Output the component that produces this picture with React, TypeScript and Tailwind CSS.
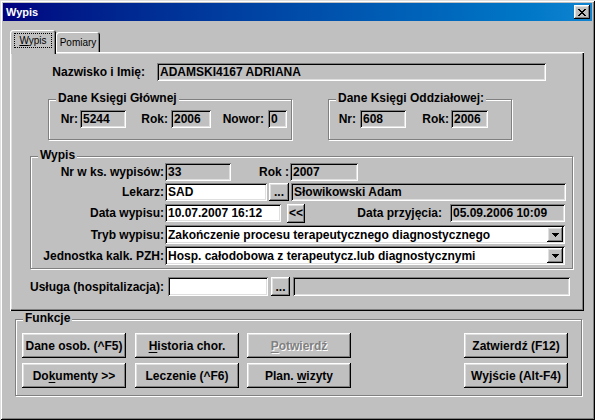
import type { ReactNode } from "react";

// Win98 bevels, drawn as inset shadows so they take no layout space
const SUNKEN =
  "shadow-[inset_1px_1px_0_#808080,inset_-1px_-1px_0_#ffffff,inset_2px_2px_0_#000000,inset_-2px_-2px_0_#dfdfdf]";
const RAISED =
  "shadow-[inset_-1px_-1px_0_#000000,inset_1px_1px_0_#ffffff,inset_-2px_-2px_0_#808080,inset_2px_2px_0_#dfdfdf]";
const ETCHED = "border border-[#808080] shadow-[1px_1px_0_#ffffff,inset_1px_1px_0_#ffffff]";

type P = { className?: string; children?: ReactNode };

function Field({ className = "", white, children }: P & { white?: boolean }) {
  return (
    <div
      className={`flex items-center shrink-0 pl-[3px] overflow-hidden whitespace-nowrap ${
        white ? "bg-white" : "bg-[#c0c0c0]"
      } ${SUNKEN} ${className}`}
    >
      {children}
    </div>
  );
}

function Label({ className = "", children }: P) {
  return <span className={`shrink-0 text-right whitespace-nowrap ${className}`}>{children}</span>;
}

function Btn({ className = "", disabled, children }: P & { disabled?: boolean }) {
  return (
    <button
      type="button"
      className={`shrink-0 flex items-center justify-center bg-[#c0c0c0] whitespace-nowrap ${RAISED} ${
        disabled ? "text-[#808080] [text-shadow:1px_1px_0_#ffffff]" : ""
      } ${className}`}
    >
      <span>{children}</span>
    </button>
  );
}

function Group({ title, className = "", children }: P & { title: string }) {
  return (
    <div className={`relative shrink-0 ${ETCHED} ${className}`}>
      <span className="absolute left-[7px] top-[-9px] px-[2px] leading-[14px] bg-[#c0c0c0] whitespace-nowrap">
        {title}
      </span>
      {children}
    </div>
  );
}

function ArrowDown() {
  return (
    <svg width="7" height="4" viewBox="0 0 7 4" shapeRendering="crispEdges">
      <path d="M0 0h7v1H0z M1 1h5v1H1z M2 2h3v1H2z M3 3h1v1H3z" fill="#000" />
    </svg>
  );
}

function Combo({ children }: P) {
  return (
    <div className={`flex items-center shrink-0 ml-[1px] w-[400px] h-[19px] bg-white pl-[3px] pr-[2px] ${SUNKEN}`}>
      <span className="flex-1 whitespace-nowrap overflow-hidden">{children}</span>
      <span className={`w-[16px] h-[15px] flex items-center justify-center bg-[#c0c0c0] ${RAISED}`}>
        <ArrowDown />
      </span>
    </div>
  );
}

function CloseGlyph() {
  return (
    <svg width="8" height="7" viewBox="0 0 8 7" shapeRendering="crispEdges">
      <path
        d="M0 0h2v1H0z M6 0h2v1H6z M1 1h2v1H1z M5 1h2v1H5z M2 2h4v1H2z M3 3h2v1H3z M2 4h4v1H2z M1 5h2v1H1z M5 5h2v1H5z M0 6h2v1H0z M6 6h2v1H6z"
        fill="#000"
      />
    </svg>
  );
}

export default function App() {
  return (
    <div
      className="w-[595px] h-[420px] bg-[#c0c0c0] p-[3px] flex flex-col text-[12px] font-bold text-black [font-family:'Liberation_Sans',Arial,sans-serif] shadow-[inset_1px_1px_0_#dfdfdf,inset_-1px_-1px_0_#000000,inset_2px_2px_0_#ffffff,inset_-2px_-2px_0_#808080]"
    >
      {/* Title bar */}
      <div className="h-[18px] shrink-0 flex items-center justify-between pl-[3px] pr-[2px] bg-linear-to-r from-[#000080] to-[#1084d0]">
        <span className="text-white text-[11px] font-bold">Wypis</span>
        <button type="button" className={`w-[16px] h-[14px] flex items-center justify-center bg-[#c0c0c0] ${RAISED}`}>
          <CloseGlyph />
        </button>
      </div>

      <div className="flex flex-col">
        {/* Tabs */}
        <div className="mt-[9px] ml-[7px] h-[22px] flex items-end relative z-10 font-normal text-[10px]">
          <div className="w-[46px] h-[24px] mb-[-2px] pt-[3px] flex justify-center bg-[#c0c0c0] rounded-t-[3px] shadow-[inset_1px_1px_0_#ffffff,inset_-1px_0_0_#000000,inset_-2px_0_0_#808080]">
            <span className="w-[38px] h-[15px] flex items-center justify-center border border-dotted border-black">
              <span>
                <span className="underline underline-offset-1">W</span>ypis
              </span>
            </span>
          </div>
          <div className="w-[44px] h-[20px] flex items-center justify-center rounded-t-[3px] shadow-[inset_1px_1px_0_#ffffff,inset_-1px_0_0_#000000,inset_-2px_0_0_#808080]">
            Pomiary
          </div>
        </div>

        {/* Tab panel */}
        <div className="ml-[7px] w-[574px] h-[259px] pt-[11px] flex flex-col bg-[#c0c0c0] shadow-[inset_1px_1px_0_#ffffff,inset_-1px_-1px_0_#000000,inset_-2px_-2px_0_#808080,inset_2px_2px_0_#dfdfdf]">
          <div className="flex items-center h-[18px]">
            <Label className="w-[135px]">Nazwisko i Imię:</Label>
            <Field className="ml-[12px] w-[389px] h-[18px]">ADAMSKI4167 ADRIANA</Field>
          </div>

          <div className="mt-[18px] flex">
            <Group title="Dane Księgi Głównej" className="ml-[38px] w-[244px] h-[41px] pt-[10px]">
              <div className="flex items-center h-[18px]">
                <Label className="w-[29px]">Nr:</Label>
                <Field className="ml-[2px] w-[46px] h-[18px]">5244</Field>
                <Label className="w-[42px]">Rok:</Label>
                <Field className="ml-[3px] w-[40px] h-[18px]">2006</Field>
                <Label className="w-[53px]">Nowor:</Label>
                <Field className="ml-[4px] w-[19px] h-[18px]">0</Field>
              </div>
            </Group>
            <Group title="Dane Księgi Oddziałowej:" className="ml-[36px] w-[184px] h-[41px] pt-[10px]">
              <div className="flex items-center h-[18px]">
                <Label className="w-[27px]">Nr:</Label>
                <Field className="ml-[4px] w-[46px] h-[18px]">608</Field>
                <Label className="w-[43px]">Rok:</Label>
                <Field className="ml-[2px] w-[37px] h-[18px]">2006</Field>
              </div>
            </Group>
          </div>

          <Group title="Wypis" className="mt-[16px] ml-[20px] w-[543px] h-[113px] pt-[6px]">
            <div className="flex items-center h-[18px]">
              <Label className="w-[133px]">Nr w ks. wypisów:</Label>
              <Field className="ml-[1px] w-[66px] h-[18px]">33</Field>
              <Label className="w-[58px]">Rok :</Label>
              <Field className="ml-[1px] w-[68px] h-[18px]">2007</Field>
            </div>
            <div className="mt-[2px] flex items-center h-[18px]">
              <Label className="w-[133px]">Lekarz:</Label>
              <Field white className="ml-[1px] w-[102px] h-[18px]">SAD</Field>
              <Btn className="ml-[2px] w-[20px] h-[18px]">...</Btn>
              <Field className="ml-[2px] w-[275px] h-[18px]">Słowikowski Adam</Field>
            </div>
            <div className="mt-[3px] flex items-center h-[18px]">
              <Label className="w-[133px]">Data wypisu:</Label>
              <Field white className="ml-[1px] w-[116px] h-[18px]">10.07.2007 16:12</Field>
              <Btn className="ml-[6px] w-[18px] h-[19px]">&lt;&lt;</Btn>
              <Label className="w-[137px]">Data przyjęcia:</Label>
              <Field className="ml-[8px] w-[115px] h-[18px]">05.09.2006 10:09</Field>
            </div>
            <div className="mt-[3px] flex items-center h-[19px]">
              <Label className="w-[133px]">Tryb wypisu:</Label>
              <Combo>Zakończenie procesu terapeutycznego diagnostycznego</Combo>
            </div>
            <div className="mt-[2px] flex items-center h-[19px]">
              <Label className="w-[133px]">Jednostka kalk. PZH:</Label>
              <Combo>Hosp. całodobowa z terapeutycz.lub diagnostycznymi</Combo>
            </div>
          </Group>

          <div className="mt-[8px] flex items-center h-[19px]">
            <Label className="w-[154px]">Usługa (hospitalizacja):</Label>
            <Field white className="ml-[4px] w-[100px] h-[19px]" />
            <Btn className="ml-[3px] w-[19px] h-[19px]">...</Btn>
            <Field className="ml-[3px] w-[277px] h-[19px]" />
          </div>
        </div>

        {/* Funkcje */}
        <Group title="Funkcje" className="mt-[8px] ml-[12px] w-[567px] h-[77px] pt-[13px] pl-[6px]">
          <div className="flex h-[25px]">
            <Btn className="w-[104px] h-[25px]">Dane osob. (^F5)</Btn>
            <Btn className="ml-[9px] w-[104px] h-[25px]">
              <span className="underline underline-offset-2">H</span>istoria chor.
            </Btn>
            <Btn disabled className="ml-[8px] w-[104px] h-[25px]">
              <span className="underline underline-offset-2">P</span>otwierdź
            </Btn>
            <Btn className="ml-[113px] w-[104px] h-[25px]">Zatwierdź (F12)</Btn>
          </div>
          <div className="mt-[5px] flex h-[25px]">
            <Btn className="w-[104px] h-[25px]">
              Do<span className="underline underline-offset-2">k</span>umenty &gt;&gt;
            </Btn>
            <Btn className="ml-[9px] w-[104px] h-[25px]">Leczenie (^F6)</Btn>
            <Btn className="ml-[8px] w-[104px] h-[25px]">
              Plan. <span className="underline underline-offset-2">w</span>izyty
            </Btn>
            <Btn className="ml-[113px] w-[104px] h-[25px]">Wyjście (Alt-F4)</Btn>
          </div>
        </Group>
      </div>
    </div>
  );
}
